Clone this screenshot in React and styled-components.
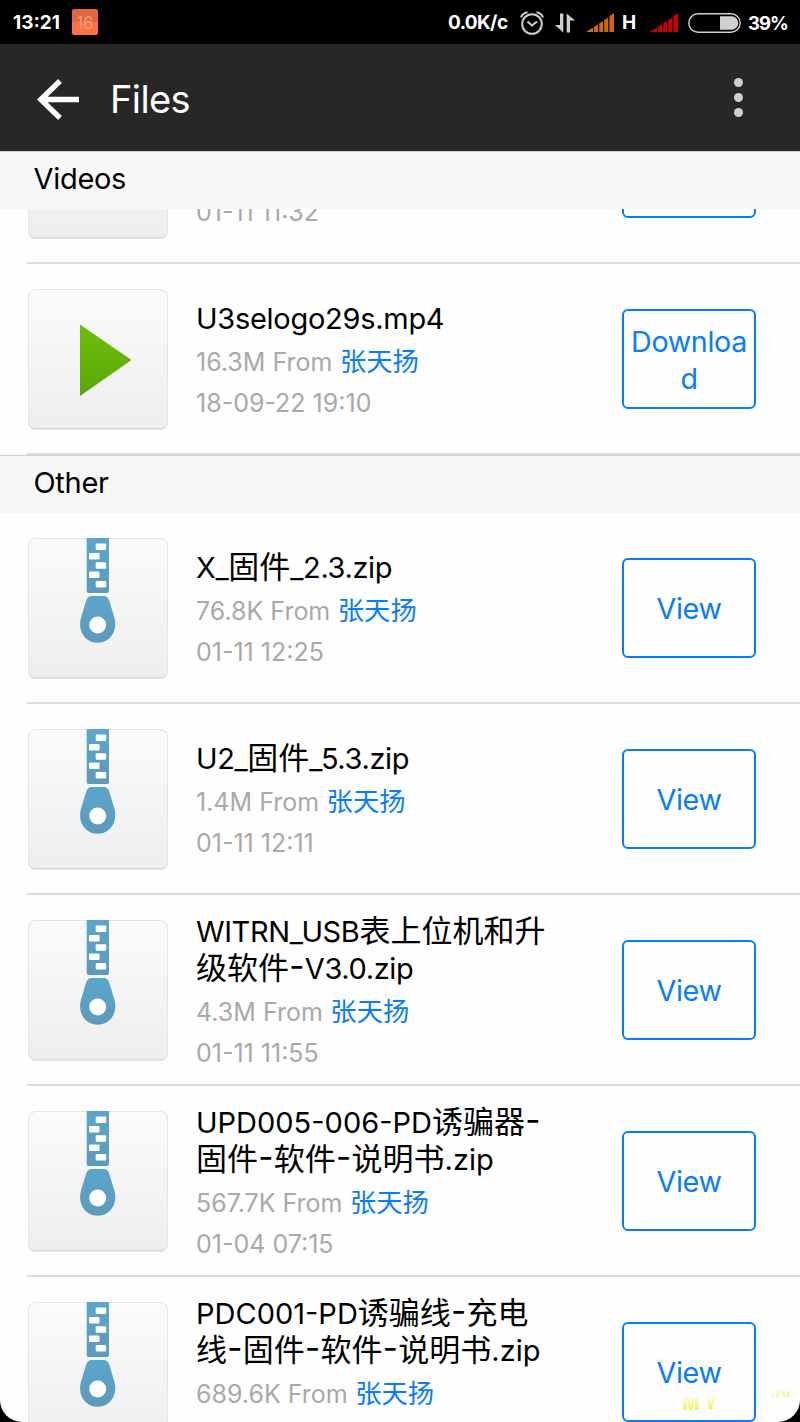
import React from "react";
import styled, { createGlobalStyle } from "styled-components";

const videos = [
  { date: "01-11 11:32" },
  {
    title: "U3selogo29s.mp4",
    size: "16.3M",
    date: "18-09-22 19:10",
    action: "Download",
    spacing: -0.28,
  },
];

const others = [
  {
    title: "X_固件_2.3.zip",
    size: "76.8K",
    date: "01-11 12:25",
    action: "View",
  },
  {
    title: "U2_固件_5.3.zip",
    size: "1.4M",
    date: "01-11 12:11",
    action: "View",
  },
  {
    title: "WITRN_USB表上位机和升\n级软件-V3.0.zip",
    size: "4.3M",
    date: "01-11 11:55",
    action: "View",
  },
  {
    title: "UPD005-006-PD诱骗器-\n固件-软件-说明书.zip",
    size: "567.7K",
    date: "01-04 07:15",
    action: "View",
    spacing: 0,
  },
  {
    title: "PDC001-PD诱骗线-充电\n线-固件-软件-说明书.zip",
    size: "689.6K",
    action: "View",
    spacing: 0,
  },
];

export default function App() {
  return (
    <Phone>
      <GlobalStyle />
      <StatusBar>
        <Clock>13:21</Clock>
        <Badge>16</Badge>
        <Speed>0.0K/c</Speed>
        <AlarmIcon />
        <Slot $gap={11}>
          <TransferIcon />
        </Slot>
        <Slot $gap={11}>
          <SignalIcon color="#d06a04" />
        </Slot>
        <Network>H</Network>
        <SignalIcon color="#cc0000" />
        <Slot $gap={10}>
          <BatteryIcon />
        </Slot>
        <Percent>39%</Percent>
      </StatusBar>
      <Header>
        <BackIcon />
        <PageTitle>Files</PageTitle>
        <MenuDots>
          <Dot />
          <Dot />
          <Dot />
        </MenuDots>
      </Header>
      <Content>
        <SectionHeader>Videos</SectionHeader>
        <Scrolled>
          {videos.map((file) => (
            <FileRow
              key={file.date}
              file={file}
              icon={file.title && <PlayIcon />}
            />
          ))}
        </Scrolled>
        <SectionHeader>Other</SectionHeader>
        {others.map((file) => (
          <FileRow key={file.title} file={file} icon={<ZipIcon />} />
        ))}
      </Content>
      <Watermark>
        <MarkName>MY</MarkName>
        <MarkDomain>.ru</MarkDomain>
      </Watermark>
    </Phone>
  );
}

function FileRow({ file, icon }) {
  return (
    <Row>
      <Thumb>{icon}</Thumb>
      <Info>
        <FileName $spacing={file.spacing}>
          {file.title && <MixedText text={file.title} />}
        </FileName>
        <Meta>
          {file.size && (
            <>
              {file.size} From <Sender>张天扬</Sender>
            </>
          )}
        </Meta>
        <Meta $date>{file.date}</Meta>
      </Info>
      <ActionButton>{file.action}</ActionButton>
    </Row>
  );
}

// chinese runs are a bit larger than latin ones, and a dash after them is wider
function MixedText({ text }) {
  return text
    .split(/([\u4e00-\u9fff]+|(?<=[\u4e00-\u9fff])-)/)
    .map((part, i) => {
      if (i % 2 === 0) return part;
      return part === "-" ? (
        <WideDash key={i}>-</WideDash>
      ) : (
        <Han key={i}>{part}</Han>
      );
    });
}

function BackIcon() {
  return (
    <svg width="44" height="42" viewBox="0 0 44 42">
      <path
        d="M24 3 4.800 21.500 24 40M4.800 21.500H43"
        fill="none"
        stroke="#fff"
        strokeWidth="5.300"
      />
    </svg>
  );
}

function AlarmIcon() {
  return (
    <svg width="24" height="24" viewBox="0 0 24 24">
      <g fill="none" stroke="#d0d0d0" strokeWidth="2">
        <circle cx="12" cy="13" r="9.800" />
        <path d="M7.500 10.500l4.500 4 5-4" />
        <path d="M1 6.500C2 3.800 4.500 1.800 7.500 1.300M23 6.500C22 3.800 19.500 1.800 16.500 1.300" />
      </g>
    </svg>
  );
}

function TransferIcon() {
  return (
    <svg width="20" height="20" viewBox="0 0 20 20">
      <path
        d="M5 0.500h3.300V19.500L0 12h5zM11.700 19.500h3.300V7.500h5L11.700 0.500z"
        fill="#d0d0d0"
      />
    </svg>
  );
}

function SignalIcon({ color }) {
  return (
    <svg width="28" height="19" viewBox="0 0 28 19">
      <g fill={color}>
        <path d="M0 19 7 14.500V19z" />
        <path d="M8 14 12 11.300V19H8z" />
        <path d="M13.200 10.500 17 8V19h-3.800z" />
        <path d="M18.200 7.200 22.200 4.500V19h-4z" />
        <path d="M23.400 3.200 28 0V19h-4.600z" />
      </g>
    </svg>
  );
}

function BatteryIcon() {
  return (
    <svg width="53" height="20" viewBox="0 0 53 20">
      <rect
        x="0.800"
        y="0.800"
        width="51.400"
        height="18.400"
        rx="9.200"
        fill="none"
        stroke="#d0d0d0"
        strokeWidth="1.400"
      />
      <path d="M32 3.200h11.500a6.800 6.800 0 0 1 0 13.600H32z" fill="#d0d0d0" />
    </svg>
  );
}

function PlayIcon() {
  return (
    <svg width="140" height="140" viewBox="0 0 140 140">
      <defs>
        <linearGradient id="play" x1="0" y1="0" x2="0" y2="1">
          <stop offset="0" stopColor="#70bf0c" />
          <stop offset="1" stopColor="#57a606" />
        </linearGradient>
      </defs>
      <path d="M52 35.500 103.500 71 52 107z" fill="url(#play)" />
    </svg>
  );
}

function ZipIcon() {
  return (
    <svg width="140" height="140" viewBox="0 0 140 140">
      <defs>
        <linearGradient id="zip" x1="0" y1="0" x2="0" y2="1">
          <stop offset="0" stopColor="#5ba6cc" />
          <stop offset="1" stopColor="#5c9aba" />
        </linearGradient>
      </defs>
      <g transform="translate(-0.300 0)">
        <path
          d="M59 0h22.300v53a2 2 0 0 1-2 2H61a2 2 0 0 1-2-2z"
          fill="url(#zip)"
        />
        <g fill="#fff">
          <rect x="68" y="5.500" width="10.500" height="6.500" rx="1" />
          <rect x="61.300" y="15" width="10.500" height="6.500" rx="1" />
          <rect x="68" y="24.300" width="10.500" height="6.500" rx="1" />
          <rect x="61.300" y="33.600" width="10.500" height="6.500" rx="1" />
          <rect x="68" y="43" width="10.500" height="6.500" rx="1" />
        </g>
        <path
          d="M64 58h12q4 0 5.500 4.500L86.200 78C91 92 83 104.700 70 104.700S49 92 53.800 78L58.500 62.500Q60 58 64 58z"
          fill="url(#zip)"
        />
        <circle cx="70" cy="87" r="8.500" fill="#fff" />
      </g>
    </svg>
  );
}

const GlobalStyle = createGlobalStyle`
  body {
    margin: 0;
    background: #000;
    font-family: Inter, "Noto Sans CJK SC", sans-serif;
  }
`;

const Phone = styled.div`
  position: relative;
  display: flex;
  flex-direction: column;
  width: 800px;
  height: 1422px;
  overflow: hidden;
  background: #000;
`;

const StatusBar = styled.div`
  display: flex;
  flex: none;
  align-items: center;
  box-sizing: border-box;
  height: 44px;
  padding: 1px 0 0 13px;
  font-size: 19px;
  font-weight: 650;
  line-height: 46px;
  color: #fff;
  white-space: nowrap;

  svg {
    display: block;
    flex: none;
  }
`;

const Slot = styled.span`
  flex: none;
  margin-left: ${({ $gap }) => $gap}px;
`;

const Clock = styled.span`
  flex: none;
  width: 59px;
`;

const Badge = styled.span`
  width: 26px;
  height: 26px;
  margin-top: -1px;
  border-radius: 2px;
  background: linear-gradient(#e2663f 50%, #ff7043 50%);
  color: #ffc9b5;
  font-size: 17px;
  font-weight: 200;
  line-height: 28px;
  text-align: center;
`;

const Speed = styled.span`
  flex: none;
  width: 72px;
  margin-left: 350px;
  letter-spacing: -0.6px;
`;

const Network = styled.span`
  flex: none;
  width: 28px;
  margin-left: 8px;
`;

const Percent = styled.span`
  margin-left: 7px;
  font-size: 18.5px;
  letter-spacing: -1px;
`;

const Header = styled.div`
  display: flex;
  flex: none;
  align-items: center;
  box-sizing: border-box;
  height: 107px;
  padding: 3px 57px 0 36px;
  background: #272727;
`;

const PageTitle = styled.h1`
  flex: 1;
  margin: 0 0 0 30px;
  font-size: 38px;
  font-weight: 400;
  line-height: 46px;
  letter-spacing: -0.6px;
  color: #fff;
`;

const MenuDots = styled.div`
  display: flex;
  flex-direction: column;
  gap: 6px;
  padding-bottom: 3px;
`;

const Dot = styled.span`
  width: 9px;
  height: 9px;
  border-radius: 50%;
  background: #d0d0d0;
`;

const Content = styled.div`
  flex: 1;
  min-height: 0;
  overflow: hidden;
  border-radius: 0 0 22px 22px;
  background: #fefefe;
`;

const SectionHeader = styled.div`
  box-sizing: border-box;
  height: 58px;
  padding-left: 33.5px;
  border-top: 1px solid #cfcfcf;
  background: #f7f7f7;
  font-size: 29px;
  line-height: 54px;
  letter-spacing: -0.3px;
  color: #000;
`;

/* the list is scrolled, so only the tail of its first row shows */
const Scrolled = styled.div`
  display: flex;
  flex-direction: column;
  justify-content: flex-end;
  height: 246px;
  overflow: hidden;
`;

const Row = styled.div`
  display: flex;
  flex: none;
  align-items: center;
  box-sizing: border-box;
  height: 191px;
  margin-left: 27px;
  padding: 0 44px 0 1px;
  border-bottom: 2px solid #dcdcdc;
`;

const Thumb = styled.div`
  flex: none;
  box-sizing: border-box;
  width: 140px;
  height: 141px;
  margin-top: 2px;
  border-radius: 8px;
  background: linear-gradient(#fbfbfb, #eeeeee);
  box-shadow: inset 0 0 0 1px #e6e6e6, inset 0 -2px 0 #dadada;

  svg {
    display: block;
  }
`;

const Info = styled.div`
  flex: 1;
  min-width: 0;
  padding: 3px 0 0 28px;
`;

const FileName = styled.div`
  min-height: 37.5px;
  font-size: 29px;
  line-height: 37.5px;
  letter-spacing: ${({ $spacing = -0.38 }) => $spacing}px;
  color: #000;
  white-space: pre;
`;

const Han = styled.span`
  font-size: 31px;
  line-height: 1;
  letter-spacing: 0;
`;

const WideDash = styled.span`
  padding: 0 0.3px;
  font-size: 33px;
  font-feature-settings: "case";
  line-height: 1;
  letter-spacing: 0;
`;

const Meta = styled.div`
  height: 41px;
  font-size: 25px;
  line-height: ${({ $date }) => ($date ? 48 : 49)}px;
  color: #a9a9a9;
  white-space: nowrap;
`;

const Sender = styled.span`
  margin-left: 0.5px;
  font-size: 26.3px;
  line-height: 1;
  color: #087cff;
`;

const ActionButton = styled.button`
  flex: none;
  box-sizing: border-box;
  width: 134px;
  height: 100px;
  padding: 2px 4px 0;
  border: 2px solid #087cff;
  border-radius: 6px;
  background: transparent;
  font-family: inherit;
  font-size: 28.7px;
  line-height: 37px;
  letter-spacing: -0.35px;
  color: #087cff;
  word-break: break-all;
`;

const Watermark = styled.div`
  position: absolute;
  right: 9px;
  bottom: 8px;
  display: flex;
  align-items: flex-start;
  font-weight: 700;
`;

const MarkName = styled.span`
  margin: 12px 49px 0 0;
  font-size: 18px;
  font-weight: 900;
  line-height: 20px;
  letter-spacing: 4px;
  background: linear-gradient(#fffef0 10%, #f3ef70 70%);
  background-clip: text;
  color: transparent;
`;

const MarkDomain = styled.span`
  font-size: 14px;
  line-height: 20px;
  letter-spacing: 0.5px;
  background: linear-gradient(#fefefe 35%, #f6f290 55%);
  background-clip: text;
  color: transparent;
`;
